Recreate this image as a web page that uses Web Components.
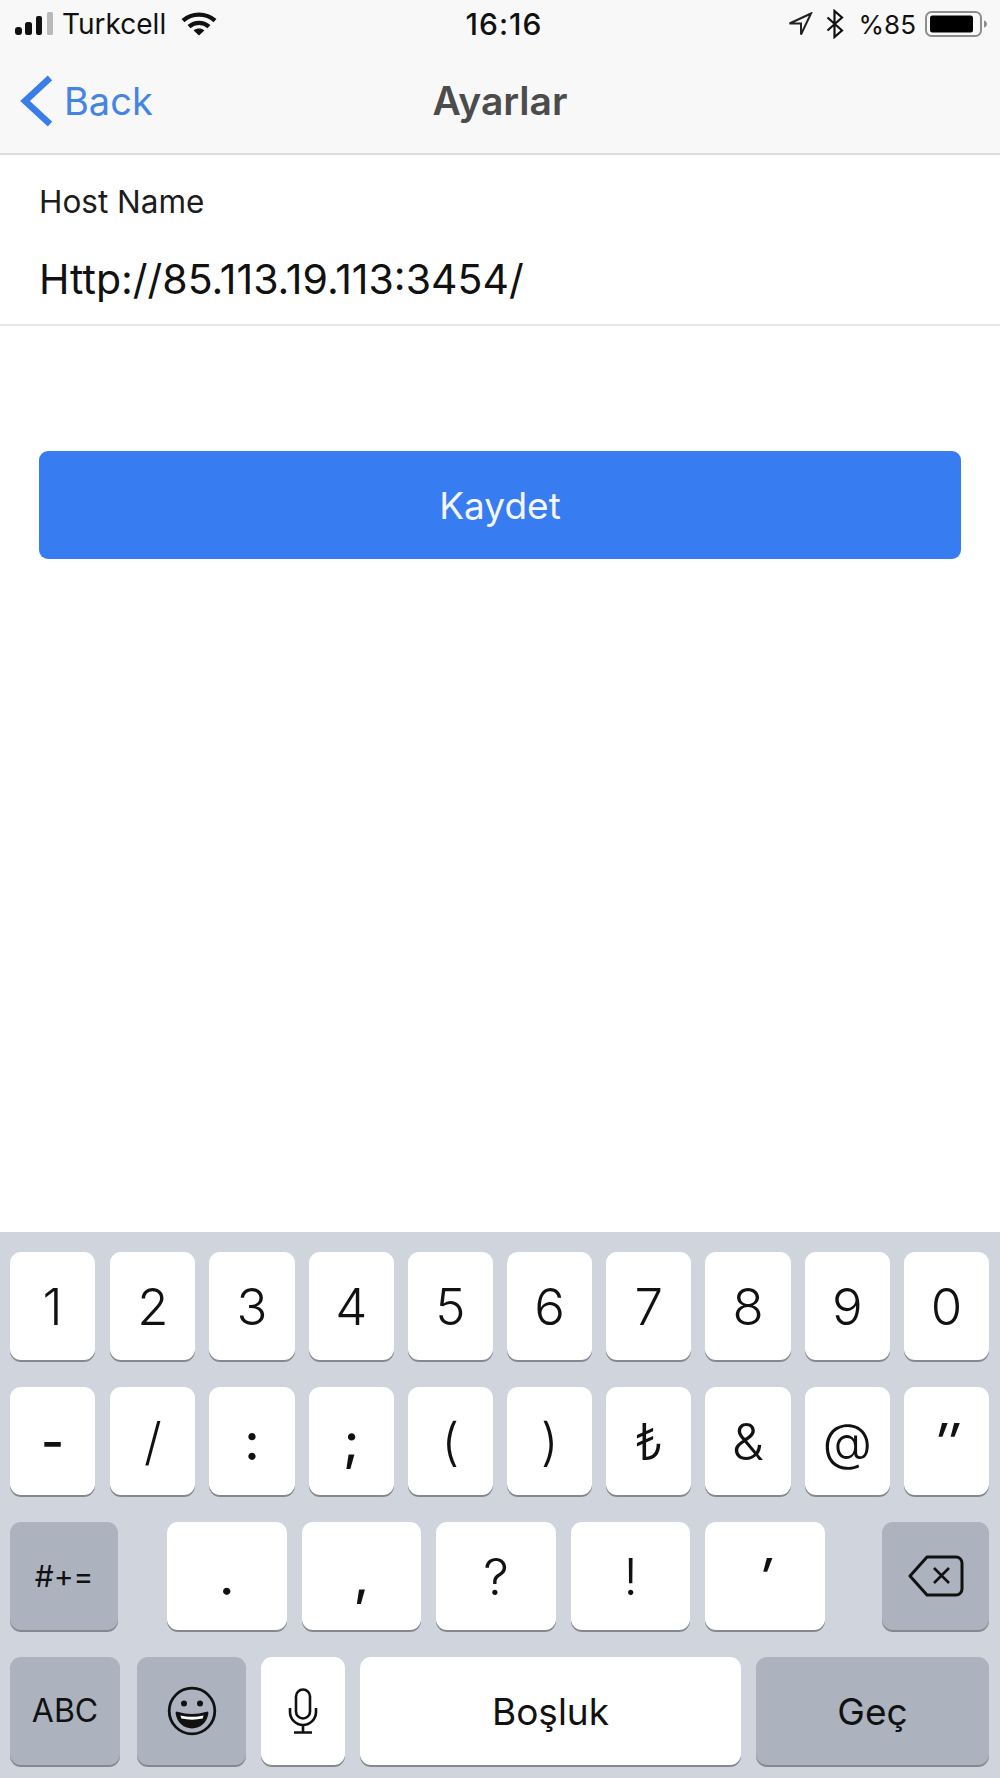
<!DOCTYPE html>
<html lang="tr">
<head>
<meta charset="utf-8">
<title>Ayarlar</title>
<style>
  html, body { margin: 0; background: #fff; }
  body { font-family: Inter, "Liberation Sans", sans-serif; color: #111; }
  settings-screen { height: 1778px; }
</style>
</head>
<body>
<settings-screen></settings-screen>

<script>
class StatusBar extends HTMLElement {
    constructor() {
        super();
        this.attachShadow({ mode: 'open' });
    }

    connectedCallback() {
        this.shadowRoot.innerHTML = `
        <style>
            :host { display: grid; grid-template-columns: 1fr auto 1fr; height: 48px; align-items: center; padding: 0 13px 0 15px; font-size: 26px; color: #111; }
            .left, .right { display: flex; align-items: center; }
            .left { font-size: 28px; }
            .right { justify-content: flex-end; }
            .time { font-weight: 500; font-size: 30px; letter-spacing: 1px; margin-left: 6px; }
            svg { display: block; flex: none; }
        </style>
        <div class="left">
            <svg width="38" height="24" viewBox="0 0 38 24">
                <rect x="0" y="15" width="7" height="8" rx="3" fill="#111"/>
                <rect x="10" y="10" width="7" height="13" rx="2.5" fill="#111"/>
                <rect x="21" y="4" width="6" height="19" rx="2" fill="#111"/>
                <rect x="32" y="0" width="6" height="23" rx="1.5" fill="#b9b9b9"/>
            </svg>
            <span style="margin-left:9px">Turkcell</span>
            <svg style="margin-left:15px" width="36" height="24" viewBox="0 0 36 24" fill="none" stroke="#111" stroke-width="4.4">
                <path d="M2 8.6C11 .6 25 .6 34 8.6"/>
                <path d="M8 14.6c6-5 14-5 20 0"/>
                <path d="M12.6 18.4 18 23.6l5.4-5.2c-3.2-2.4-7.6-2.4-10.8 0z" fill="#111" stroke="none"/>
            </svg>
        </div>
        <div class="time">16:16</div>
        <div class="right">
            <svg width="25" height="24" viewBox="0 0 25 24" fill="none" stroke="#222" stroke-width="2" stroke-linejoin="miter">
                <path d="M23 1.500 1.500 11.500h11.500v11z"/>
            </svg>
            <svg style="margin-left:13px" width="18" height="30" viewBox="0 0 18 30" fill="none" stroke="#111" stroke-width="2.200">
                <path d="M1.500 8.500 16 21.500 8.500 28V2L16 8.500 1.500 21.500"/>
            </svg>
            <span style="margin-left:15px">%85</span>
            <svg style="margin-left:9px" width="62" height="26" viewBox="0 0 62 26">
                <rect x="1" y="1" width="55" height="24" rx="5.500" fill="none" stroke="#8d8d8d" stroke-width="2"/>
                <rect x="5" y="4.500" width="43" height="17" rx="2.500" fill="#000"/>
                <path d="M59 9.500c2 .5 3 2 3 3.500s-1 3-3 3.500z" fill="#8d8d8d"/>
            </svg>
        </div>`;
    }
}

class NavBar extends HTMLElement {
    constructor() {
        super();
        this.attachShadow({ mode: 'open' });
    }

    connectedCallback() {
        this.shadowRoot.innerHTML = `
        <style>
            :host { display: grid; grid-template-columns: 1fr auto 1fr; align-items: center; height: 105px; box-sizing: border-box; }
            .back { display: flex; align-items: center; margin-left: 20px; color: #4485e4; font-size: 38px; }
            .back svg { display: block; margin-right: 12px; }
            .title { color: #4c4c4c; font-size: 39px; font-weight: 600; }
        </style>
        <div class="back">
            <svg width="32" height="52" viewBox="0 0 32 52" fill="none" stroke="#3a7dea" stroke-width="6.500">
                <path d="M30 3 5 26l25 23"/>
            </svg>
            <span>Back</span>
        </div>
        <div class="title"><slot></slot></div>`;
    }
}

class HostField extends HTMLElement {
    constructor() {
        super();
        this.attachShadow({ mode: 'open' });
    }

    connectedCallback() {
        this.shadowRoot.innerHTML = `
        <style>
            :host { display: block; height: 171px; padding: 29px 0 0 39px; box-sizing: border-box; border-bottom: 2px solid #e7e7e7; }
            .label { font-size: 31.500px; line-height: 36px; color: #1c1c1c; }
            .value { margin-top: 35px; font-size: 41px; line-height: 48px; color: #111; }
        </style>
        <div class="label">${this.getAttribute('label')}</div>
        <div class="value"><slot></slot></div>`;
    }
}

class SaveButton extends HTMLElement {
    constructor() {
        super();
        this.attachShadow({ mode: 'open' });
    }

    connectedCallback() {
        this.shadowRoot.innerHTML = `
        <style>
            :host { display: flex; align-items: center; justify-content: center; height: 108px; margin: 125px 39px 0; border-radius: 9px; background: #387cf2; color: #f4f7ff; font-size: 37px; }
        </style>
        <slot></slot>`;
    }
}

class KbKey extends HTMLElement {
    constructor() {
        super();
        this.attachShadow({ mode: 'open' });
    }

    connectedCallback() {
        this.shadowRoot.innerHTML = `
        <style>
            :host { display: flex; align-items: center; justify-content: center; height: 108px; box-sizing: border-box; border-radius: 11px; background: #fff; box-shadow: 0 2px 0 #85898f; color: #111; font-size: 51px; font-weight: 350; line-height: 1; }
            :host([dark]) { background: #acb3bf; }
            :host([strong]) { font-weight: 500; }
            :host([slant]) { font-style: italic; font-weight: 500; }
            :host([big]) { font-size: 37px; font-weight: 400; }
            :host([small]) { font-size: 32px; font-weight: 400; }
            :host([tiny]) { font-size: 30px; font-weight: 400; }
        </style>
        <slot></slot>`;
    }
}

class IosKeyboard extends HTMLElement {
    constructor() {
        super();
        this.attachShadow({ mode: 'open' });
    }

    connectedCallback() {
        var rows = [
            ['1', '2', '3', '4', '5', '6', '7', '8', '9', '0'],
            ['-', '/', ':', ';', '(', ')', '₺', '&', '@', '″']
        ];
        var flags = { '-': 'strong', ':': 'strong', ';': 'strong', '″': 'slant' };
        var numberRows = rows.map(function (row) {
            return '<div class="row ten">' + row.map(function (k) {
                return '<kb-key ' + (flags[k] || '') + '>' + k + '</kb-key>';
            }).join('') + '</div>';
        }).join('');

        this.shadowRoot.innerHTML = `
        <style>
            :host { display: flex; flex-direction: column; gap: 27px; padding: 20px 11px 13px 10px; background: #d0d5dd; }
            .row { display: flex; }
            .ten { gap: 14px; }
            .ten kb-key { flex: 1; }
            .ten kb-key:first-child { margin-right: 1px; }
            .mid { display: flex; gap: 15px; margin-left: 49px; }
            .mid kb-key { width: 119.600px; }
            svg { display: block; }
        </style>
        ${numberRows}
        <div class="row">
            <kb-key dark tiny style="width:108px">#+=</kb-key>
            <div class="mid">
                <kb-key strong>.</kb-key><kb-key strong>,</kb-key><kb-key>?</kb-key><kb-key>!</kb-key><kb-key slant>′</kb-key>
            </div>
            <kb-key dark style="width:107px;margin-left:auto">
                <svg width="56" height="42" viewBox="0 0 56 42" fill="none" stroke="#111" stroke-width="3">
                    <path d="M19 2h29a6 6 0 0 1 6 6v26a6 6 0 0 1-6 6H19L2 21z" stroke-linejoin="round"/>
                    <path d="M26 13l15 15M41 13 26 28" stroke-width="2.600"/>
                </svg>
            </kb-key>
        </div>
        <div class="row">
            <kb-key dark small style="width:110px">ABC</kb-key>
            <kb-key dark style="width:109px;margin-left:17px">
                <svg width="50" height="50" viewBox="0 0 50 50" fill="none" stroke="#111" stroke-width="2.800">
                    <circle cx="25" cy="25" r="22.800"/>
                    <circle cx="17" cy="17.500" r="3" fill="#111" stroke="none"/>
                    <circle cx="33" cy="17.500" r="3" fill="#111" stroke="none"/>
                    <path d="M10 27c9 3 21 3 30 0-1 8-7 14-15 14S11 35 10 27z" fill="#111" stroke-linejoin="round"/>
                    <path d="M13.500 29.500c7 1.800 16 1.800 23 0l-.8 3c-7 1.500-14.500 1.500-21.400 0z" fill="#fff" stroke="none"/>
                </svg>
            </kb-key>
            <kb-key style="width:84px;margin-left:15px">
                <svg width="30" height="46" viewBox="0 0 30 46" fill="none" stroke="#111" stroke-width="2.600">
                    <rect x="8" y="1.500" width="14" height="29" rx="7"/>
                    <path d="M2 20v4a13 13 0 0 0 26 0v-4M15 37v7M6 44.500h18"/>
                </svg>
            </kb-key>
            <kb-key big style="flex:1;margin-left:15px">Boşluk</kb-key>
            <kb-key dark big style="width:233px;margin-left:15px">Geç</kb-key>
        </div>`;
    }
}

class SettingsScreen extends HTMLElement {
    constructor() {
        super();
        this.attachShadow({ mode: 'open' });
    }

    connectedCallback() {
        this.shadowRoot.innerHTML = `
        <style>
            :host { display: flex; flex-direction: column; }
            header { background: #f8f8f8; border-bottom: 2px solid #dcdcdc; }
            main { flex: 1; }
        </style>
        <header>
            <status-bar></status-bar>
            <nav-bar>Ayarlar</nav-bar>
        </header>
        <main>
            <host-field label="Host Name">Http://85.113.19.113:3454/</host-field>
            <save-button>Kaydet</save-button>
        </main>
        <ios-keyboard></ios-keyboard>`;
    }
}

customElements.define('status-bar', StatusBar);
customElements.define('nav-bar', NavBar);
customElements.define('host-field', HostField);
customElements.define('save-button', SaveButton);
customElements.define('kb-key', KbKey);
customElements.define('ios-keyboard', IosKeyboard);
customElements.define('settings-screen', SettingsScreen);
</script>
</body>
</html>
